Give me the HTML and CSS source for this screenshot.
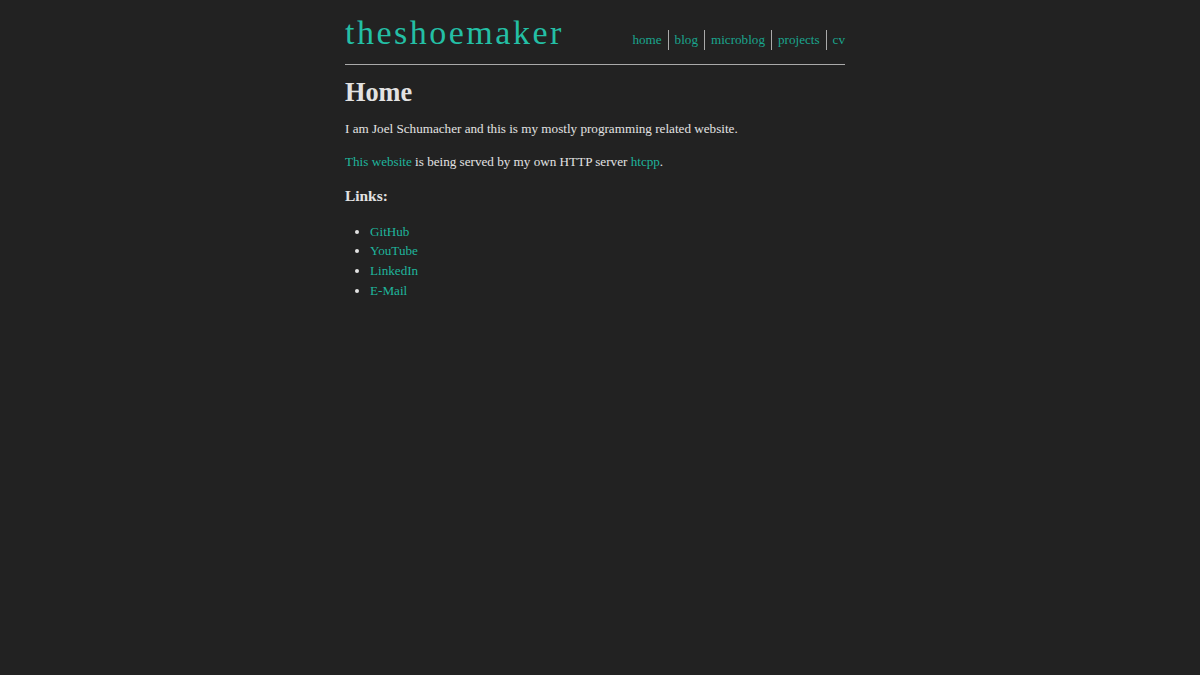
FILE: index.html
```html
<!DOCTYPE html>
<html lang="en">
<head>
<meta charset="utf-8">
<title>theshoemaker</title>
<link rel="stylesheet" href="styles.css">
</head>
<body>
<div class="page">
  <header class="header">
    <a class="site-title" href="#">theshoemaker</a>
    <nav class="nav">
      <a href="#">home</a>
      <a href="#">blog</a>
      <a href="#">microblog</a>
      <a href="#">projects</a>
      <a href="#">cv</a>
    </nav>
  </header>
  <hr class="rule">
  <main class="content">
    <h1 class="title">Home</h1>
    <p class="para">I am Joel Schumacher and this is my mostly programming related website.</p>
    <p class="para"><a href="#">This website</a> is being served by my own HTTP server <a href="#">htcpp</a>.</p>
    <h3 class="subtitle">Links:</h3>
    <ul class="links">
      <li><a href="#">GitHub</a></li>
      <li><a href="#">YouTube</a></li>
      <li><a href="#">LinkedIn</a></li>
      <li><a href="#">E-Mail</a></li>
    </ul>
  </main>
</div>
</body>
</html>
```
FILE: styles.css
```css
html {
  background: #222222;
}
body {
  margin: 0;
  padding: 0 10px 0 0;
  background: #222222;
  color: #e2e2e2;
  font-family: "Liberation Serif", "Times New Roman", serif;
  font-size: 13.15px;
  line-height: 1.5;
}
a {
  color: #1fb59c;
  text-decoration: none;
}
.page {
  width: 500px;
  margin: 0 auto;
}
.header {
  display: flex;
  justify-content: space-between;
  align-items: baseline;
  padding-top: 10px;
}
.site-title {
  font-size: 34px;
  letter-spacing: 2.5px;
  line-height: 46px;
  color: #24bfa5;
}
.nav {
  display: flex;
  align-items: baseline;
}
.nav a {
  padding: 2px 6px 3px;
  border-left: 1px solid #aaaaaa;
  color: #1aa58e;
  line-height: 15px;
}
.nav a:first-child {
  border-left: none;
}
.nav a:last-child {
  padding-right: 0;
}
.rule {
  border: none;
  border-top: 1px solid #aaaaaa;
  margin: 8px 0 0;
}
.content {
  padding-top: 1px;
}
.title {
  font-size: 26.3px;
  line-height: 32px;
  margin: 11px 0 10px;
}
.para {
  margin: 0 0 13px;
}
.subtitle {
  font-size: 15.4px;
  margin: 0 0 14px;
}
.links {
  margin: 0;
  padding-left: 25px;
}
```
